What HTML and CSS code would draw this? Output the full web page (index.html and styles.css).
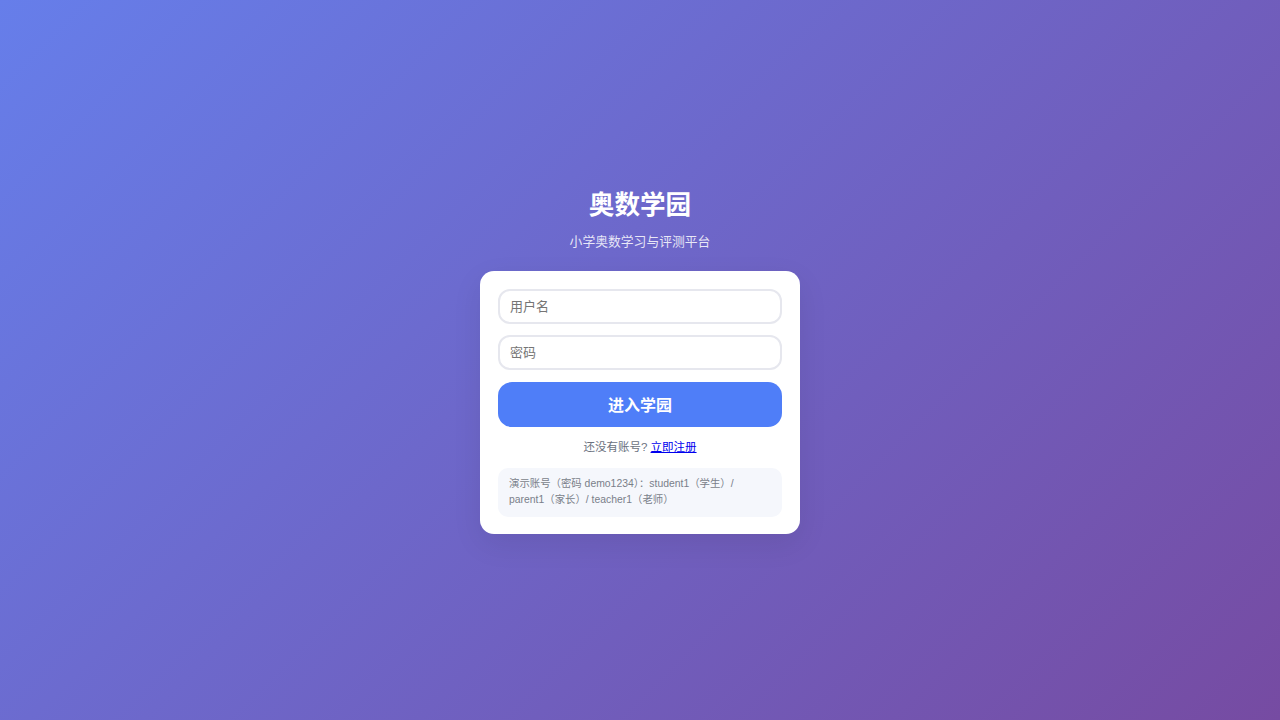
FILE: index.html
```html
<!DOCTYPE html>
<html lang="zh">
<head>
<meta charset="utf-8">
<title>奥数学园</title>
<link rel="stylesheet" href="styles.css">
</head>
<body>
<main class="page">
  <div class="login">
    <h1 class="title">奥数学园</h1>
    <p class="subtitle">小学奥数学习与评测平台</p>
    <form class="card">
      <input class="field" type="text" placeholder="用户名">
      <input class="field field-second" type="password" placeholder="密码">
      <button class="submit" type="button">进入学园</button>
      <p class="register">还没有账号? <a href="#" class="register-link">立即注册</a></p>
      <div class="demo">演示账号（密码 demo1234）：student1（学生）/ parent1（家长）/ teacher1（老师）</div>
    </form>
  </div>
</main>
</body>
</html>
```
FILE: styles.css
```css
* { box-sizing: border-box; }
html, body { margin: 0; height: 100%; }
body {
  font-family: "Liberation Sans", "Noto Sans CJK SC", sans-serif;
  background: linear-gradient(135deg, #667eea 0%, #764ba2 100%);
  min-height: 720px;
}
.page {
  height: 720px;
  display: flex;
  align-items: center;
  justify-content: center;
}
.login {
  width: 320px;
  display: flex;
  flex-direction: column;
  align-items: stretch;
  text-align: center;
}
.title {
  margin: 0;
  color: #fff;
  font-size: 25.6px;
  font-weight: 700;
  line-height: 36px;
}
.subtitle {
  margin: 9px 0 19px;
  color: rgba(255,255,255,0.85);
  font-size: 12.8px;
  line-height: 20px;
}
.card {
  background: #fff;
  border-radius: 14px;
  padding: 18px 18px 17px;
  display: flex;
  flex-direction: column;
  box-shadow: 0 10px 30px rgba(0,0,0,0.08);
}
.field {
  height: 35px;
  border: 2px solid #e6e7ee;
  border-radius: 12px;
  padding: 0 10px;
  font-family: inherit;
  font-size: 13px;
  color: #333;
  outline: none;
}
.field-second { margin-top: 11px; }
.field::placeholder { color: #757575; }
.submit {
  margin-top: 12px;
  height: 45px;
  border: none;
  border-radius: 14px;
  background: #4f7ef8;
  color: #fff;
  font-family: inherit;
  font-size: 16px;
  font-weight: 700;
}
.register {
  margin: 12px 0 0;
  font-size: 11.5px;
  line-height: 16px;
  color: #6b7280;
}
.register-link { color: #0000ee; }
.demo {
  margin-top: 13px;
  background: #f5f7fc;
  border-radius: 10px;
  padding: 8px 11px 9px;
  font-size: 10.4px;
  line-height: 16px;
  color: #7a7f8a;
  text-align: left;
}
```
